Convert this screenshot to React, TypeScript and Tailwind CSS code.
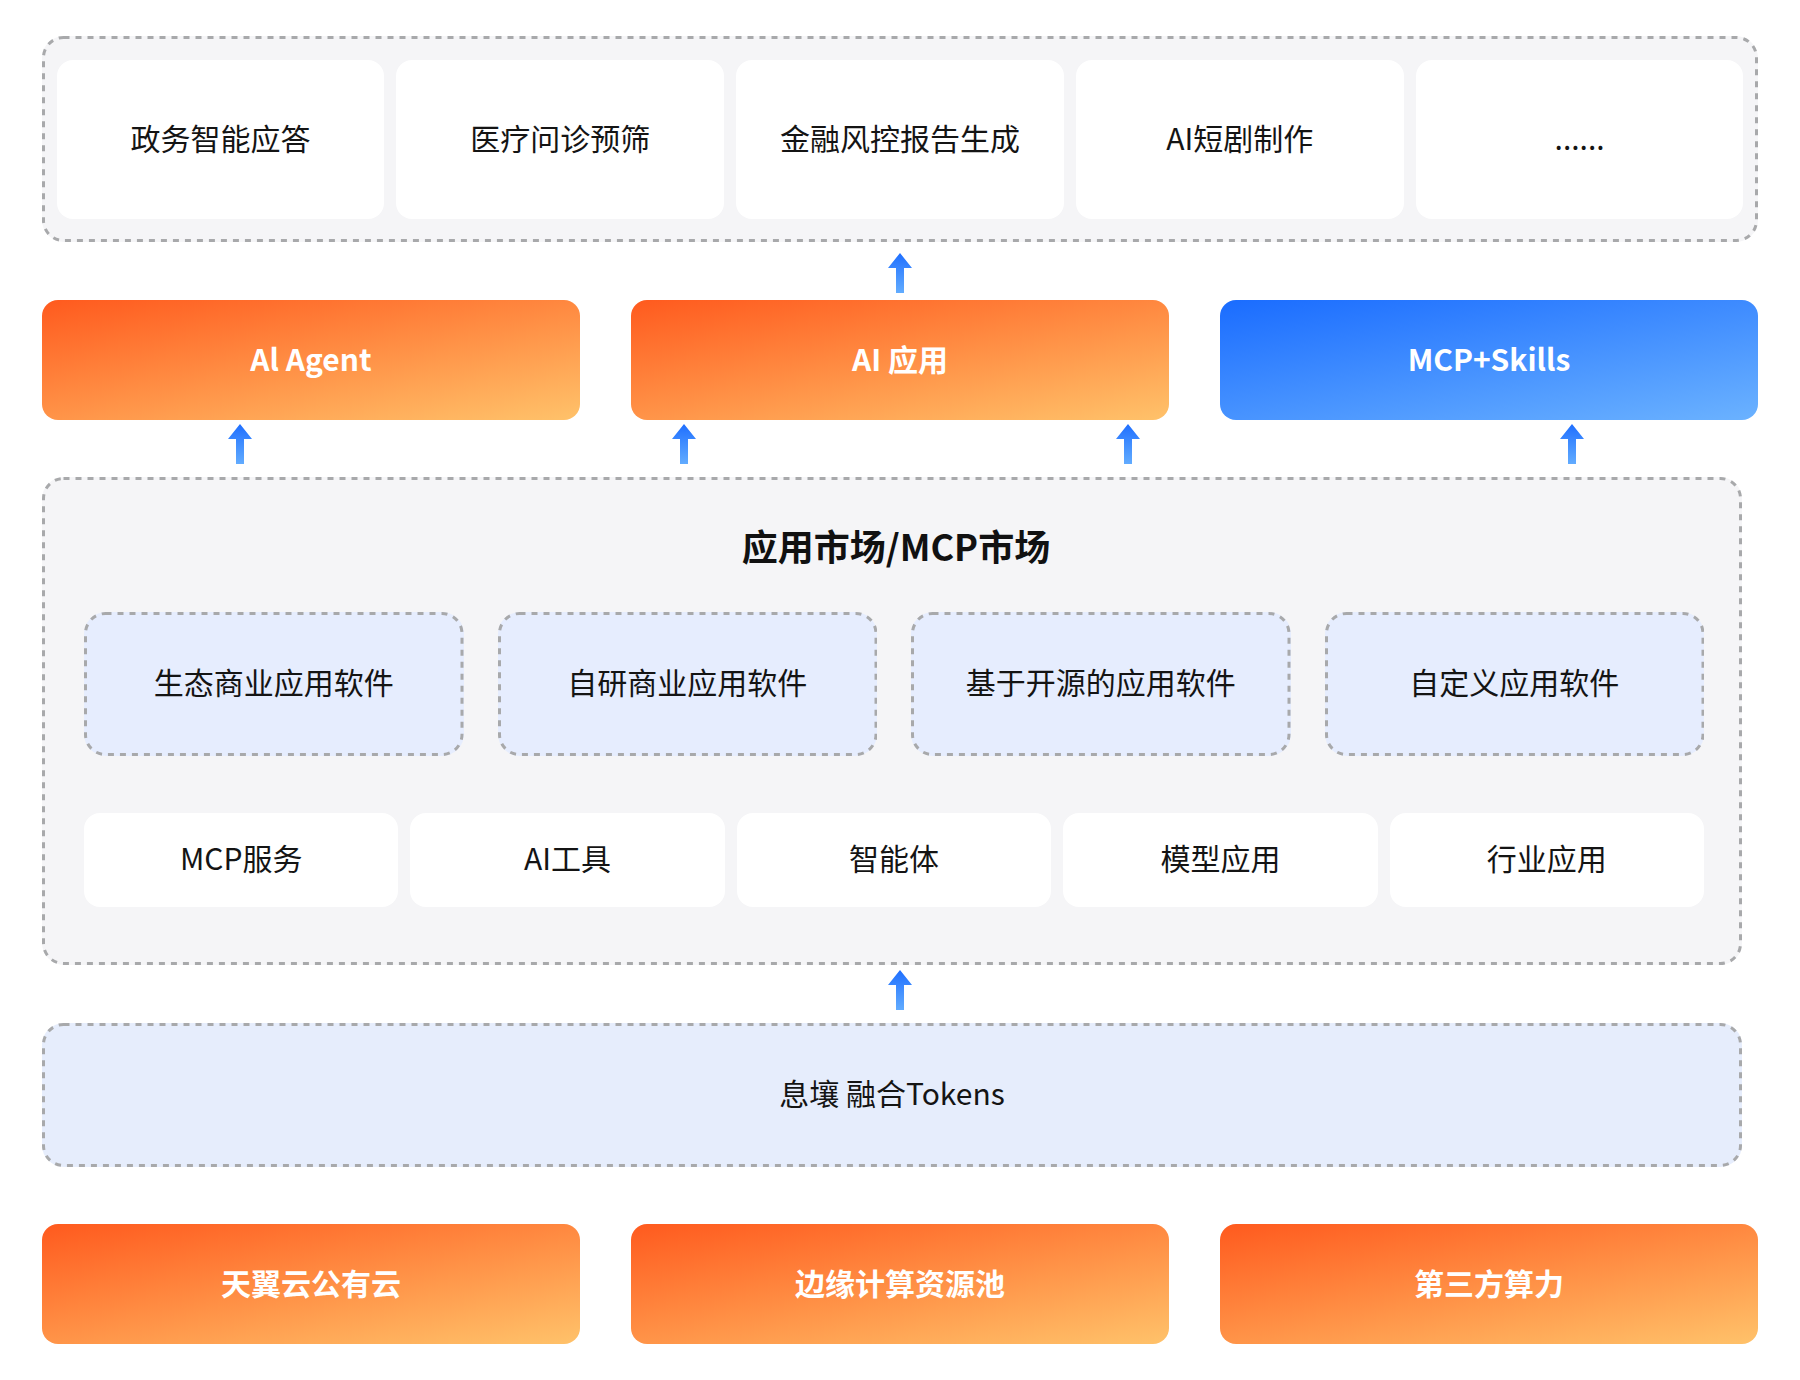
const sans = "font-['Noto_Sans_CJK_SC','Noto_Sans',sans-serif]";

const topItems = ['政务智能应答', '医疗问诊预筛', '金融风控报告生成', 'AI短剧制作', '......'];
const softwareItems = ['生态商业应用软件', '自研商业应用软件', '基于开源的应用软件', '自定义应用软件'];
const marketItems = ['MCP服务', 'AI工具', '智能体', '模型应用', '行业应用'];

function Arrow() {
  return (
    <svg width="24" height="40" viewBox="0 0 24 40" className="block shrink-0">
      <defs>
        <linearGradient id="arrowFill" x1="0" y1="0" x2="0" y2="1">
          <stop offset="0" stopColor="#1f6fff" />
          <stop offset="1" stopColor="#62acff" />
        </linearGradient>
      </defs>
      <path d="M12 0 L24 15 L16 15 L16 40 L8 40 L8 15 L0 15 Z" fill="url(#arrowFill)" />
    </svg>
  );
}

// css dashed borders come out too tight, the picture has 6/6 dashes
function DashedFrame() {
  return (
    <svg className="pointer-events-none absolute inset-0 size-full">
      <rect
        x="1.5"
        y="1.5"
        rx="20"
        className="h-[calc(100%-3px)] w-[calc(100%-3px)]"
        fill="none"
        stroke="#a8a9ab"
        strokeWidth="3"
        strokeDasharray="6 6"
      />
    </svg>
  );
}

function Banner({ label, blue }: { label: string; blue?: boolean }) {
  const fill = blue
    ? 'bg-[linear-gradient(170deg,#1a6cff,#6bb2ff)]'
    : 'bg-[linear-gradient(170deg,#ff5a1e,#ffc26a)]';
  return (
    <div className={`flex h-[120px] items-center justify-center rounded-[16px] pb-[4px] text-[30px] font-bold text-white ${fill}`}>
      {label}
    </div>
  );
}

export default function App() {
  return (
    <div className={`h-[1380px] w-[1800px] bg-white pl-[42px] pt-[36px] text-[30px] text-[#141414] ${sans}`}>
      {/* applications */}
      <div className="relative grid h-[206px] w-[1716px] grid-cols-5 gap-3 rounded-[22px] bg-[#f5f5f7] pb-[23px] pl-[14.5px] pr-[14.5px] pt-[24px]">
        {topItems.map((t) => (
          <div key={t} className="flex items-center justify-center rounded-[16px] bg-white pb-[5px]">{t}</div>
        ))}
        <DashedFrame />
      </div>

      <div className="flex h-[58px] w-[1716px] justify-center pt-[11px]">
        <Arrow />
      </div>

      <div className="grid w-[1716px] grid-cols-3 gap-[51px]">
        <Banner label="Al Agent" />
        <Banner label="AI 应用" />
        <Banner label="MCP+Skills" blue />
      </div>

      <div className="flex h-[57px] gap-[420px] pl-[186px] pt-[4px]">
        <Arrow />
        <Arrow />
        <Arrow />
        <Arrow />
      </div>

      {/* market */}
      <div className="relative flex h-[488px] w-[1700px] flex-col rounded-[22px] bg-[#f5f5f7] pl-[42px] pr-[38px]">
        <div className="flex h-[135px] items-center justify-center pl-[4px] pt-px text-[36px] font-bold leading-none text-[#111]">
          应用市场/MCP市场
        </div>
        <div className="grid grid-cols-4 gap-[34px]">
          {softwareItems.map((t) => (
            <div key={t} className="relative flex h-[144px] items-center justify-center rounded-[22px] bg-[#e6edfe] pb-[6px]">
              {t}
              <DashedFrame />
            </div>
          ))}
        </div>
        <div className="mt-[57px] grid grid-cols-5 gap-3">
          {marketItems.map((t) => (
            <div key={t} className="flex h-[94px] items-center justify-center rounded-[16px] bg-white pb-[5px]">{t}</div>
          ))}
        </div>
        <DashedFrame />
      </div>

      <div className="flex h-[58px] w-[1716px] justify-center pt-[5px]">
        <Arrow />
      </div>

      <div className="relative flex h-[144px] w-[1700px] items-center justify-center rounded-[22px] bg-[#e6edfc] pb-[5px]">
        息壤 融合Tokens
        <DashedFrame />
      </div>

      <div className="mt-[57px] grid w-[1716px] grid-cols-3 gap-[51px]">
        <Banner label="天翼云公有云" />
        <Banner label="边缘计算资源池" />
        <Banner label="第三方算力" />
      </div>
    </div>
  );
}
